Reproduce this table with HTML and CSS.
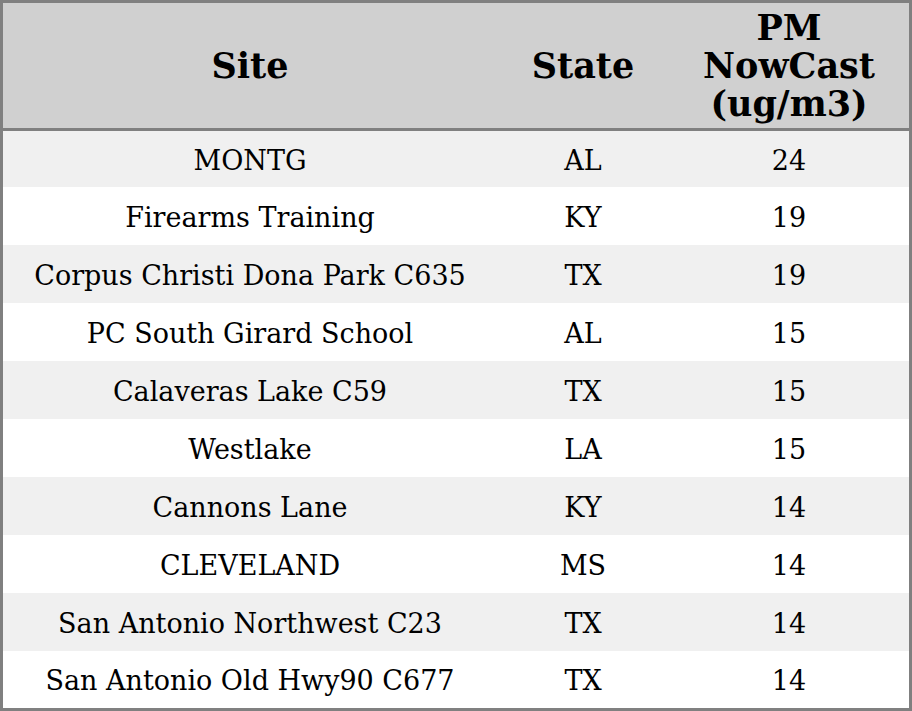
FILE: index.html
```html
<!DOCTYPE html>
<html>
<head>
<meta charset="utf-8">
<link rel="stylesheet" href="styles.css">
</head>
<body>
<table class="data">
  <colgroup>
    <col class="c-site">
    <col class="c-state">
    <col class="c-pm">
  </colgroup>
  <thead>
    <tr><th>Site</th><th>State</th><th>PM<br>NowCast<br>(ug/m3)</th></tr>
  </thead>
  <tbody>
    <tr><td>MONTG</td><td>AL</td><td>24</td></tr>
    <tr><td>Firearms Training</td><td>KY</td><td>19</td></tr>
    <tr><td>Corpus Christi Dona Park C635</td><td>TX</td><td>19</td></tr>
    <tr><td>PC South Girard School</td><td>AL</td><td>15</td></tr>
    <tr><td>Calaveras Lake C59</td><td>TX</td><td>15</td></tr>
    <tr><td>Westlake</td><td>LA</td><td>15</td></tr>
    <tr><td>Cannons Lane</td><td>KY</td><td>14</td></tr>
    <tr><td>CLEVELAND</td><td>MS</td><td>14</td></tr>
    <tr><td>San Antonio Northwest C23</td><td>TX</td><td>14</td></tr>
    <tr><td>San Antonio Old Hwy90 C677</td><td>TX</td><td>14</td></tr>
  </tbody>
</table>
</body>
</html>
```

FILE: styles.css
```css
html, body {
  margin: 0;
  padding: 0;
  background: #ffffff;
}
.data {
  width: 912px;
  border: 3px solid #808080;
  border-spacing: 0;
  border-collapse: separate;
  table-layout: fixed;
  font-family: "DejaVu Serif", serif;
  color: #000;
}
.c-site { width: 494px; }
.c-state { width: 172px; }
.c-pm { width: 240px; }
.data th {
  background: #d0d0d0;
  font-size: 35px;
  font-weight: bold;
  line-height: 38px;
  padding: 6px 0 5px;
  border-bottom: 3px solid #808080;
  text-align: center;
}
.data td {
  font-size: 27px;
  line-height: 28px;
  padding: 17px 0 13px;
  text-align: center;
}
.data tbody tr:first-child td {
  padding: 16px 0 12px;
}
.data tbody tr:last-child td {
  padding: 16px 0 13px;
}
.data tbody tr:nth-child(odd) td {
  background: #f0f0f0;
}
```
